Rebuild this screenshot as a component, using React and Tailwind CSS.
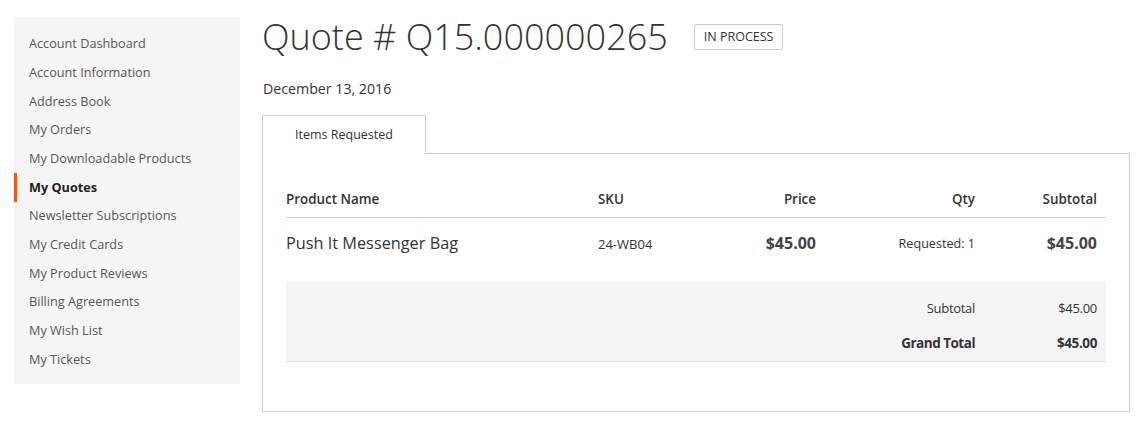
export default function App() {
  const nav = [
    "Account Dashboard",
    "Account Information",
    "Address Book",
    "My Orders",
    "My Downloadable Products",
    "My Quotes",
    "Newsletter Subscriptions",
    "My Credit Cards",
    "My Product Reviews",
    "Billing Agreements",
    "My Wish List",
    "My Tickets",
  ];
  const font = { fontFamily: '"Open Sans", "Noto Sans", sans-serif' };
  return (
    <div className="w-[1145px] h-[431px] bg-white text-[#333] flex items-start pl-[14px] pt-[17px]" style={font}>
      <aside className="w-[226px] h-[367px] bg-[#f5f5f5] pt-[12.7px] shrink-0">
        {nav.map((n) => {
          const active = n === "My Quotes";
          return (
            <div
              key={n}
              className={
                "h-[28.65px] flex items-center text-[12.7px] pl-[12px] border-l-[3px] " +
                (active ? "border-[#ff5501] font-bold text-[#222]" : "border-transparent text-[#575757]")
              }
            >
              {n}
            </div>
          );
        })}
      </aside>
      <main className="ml-[22px] w-[868px] -mt-[17px]">
        <div className="flex items-center h-[74px]">
          <h1 className="text-[36px] font-light leading-none text-[#333]">Quote # Q15.000000265</h1>
          <span className="ml-[26px] border border-[#ccc] rounded-[2px] px-[9px] h-[26px] flex items-center text-[12.5px] text-[#333] uppercase">
            In Process
          </span>
        </div>
        <div className="text-[14.2px] mt-[5px] leading-[20px] pl-px">December 13, 2016</div>
        <div className="mt-[16px] flex">
          <div className="w-[164px] h-[39px] border border-b-0 border-[#ccc] bg-white flex items-center justify-center text-[12.5px] relative z-10 -mb-px">
            Items Requested
          </div>
        </div>
        <div className="border border-[#ccc] h-[259px] px-[23px] pt-[25px]">
          <div className="grid grid-cols-[302px_112px_126px_159px_121px] h-[39px] pt-[2px] items-center text-[13.4px] font-semibold border-b border-[#ccc] text-[#333]">
            <div>Product Name</div>
            <div className="pl-[10px]">SKU</div>
            <div className="text-right pr-[10px]">Price</div>
            <div className="text-right pr-[10px]">Qty</div>
            <div className="text-right pr-[9px]">Subtotal</div>
          </div>
          <div className="grid grid-cols-[302px_112px_126px_159px_121px] h-[64px] items-start pt-[15px] leading-[20px]">
            <div className="text-[16.3px] text-[#333]">Push It Messenger Bag</div>
            <div className="pl-[10px] text-[13px] pt-[1px]">24-WB04</div>
            <div className="text-right pr-[10px] text-[16px] font-bold text-[#444]">$45.00</div>
            <div className="text-right pr-[10px] text-[12.6px] pt-[1px]">Requested: 1</div>
            <div className="text-right pr-[9px] text-[16px] font-bold text-[#444]">$45.00</div>
          </div>
          <div className="bg-[#f5f5f5] h-[80px] border-b border-[#ddd] pt-[17px]">
            <div className="grid grid-cols-[540px_159px_121px] h-[20px] items-center text-[13px]">
              <div></div>
              <div className="text-right pr-[10px] tracking-[-0.3px]">Subtotal</div>
              <div className="text-right pr-[9px] tracking-[-0.3px]">$45.00</div>
            </div>
            <div className="grid grid-cols-[540px_159px_121px] h-[20px] items-center text-[13.5px] font-bold mt-[14px]">
              <div></div>
              <div className="text-right pr-[10px] tracking-[-0.5px]">Grand Total</div>
              <div className="text-right pr-[9px] tracking-[-0.4px]">$45.00</div>
            </div>
          </div>
        </div>
      </main>
    </div>
  );
}
